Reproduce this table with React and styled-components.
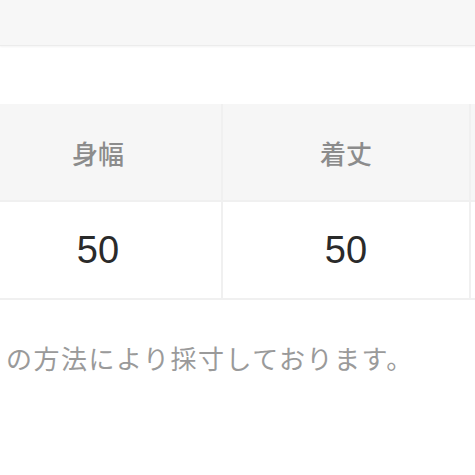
import styled, { createGlobalStyle } from "styled-components"

const Global = createGlobalStyle`
    body {
        margin: 0;
        background: #fff;
        overflow: hidden;
        font-family: "Noto Sans CJK JP", "Liberation Sans", sans-serif;
    }
`

const TopBar = styled.div`
    height: 45px;
    background: #f7f7f7;
    border-bottom: 1px solid #ececec;
    box-shadow: 0 1px 2px rgba(0,0,0,0.05);
`

const Spacer = styled.div`
    height: 58px;
`

const SizeTable = styled.div`
    display: grid;
    grid-template-columns: repeat(3, 246px);
    grid-auto-rows: 96px;
    gap: 2px;
    margin-left: -25px;
    padding: 0 0 2px;
    background: #f0f0f0;
    width: max-content;
`

const HeadCell = styled.div`
    display: flex;
    align-items: center;
    justify-content: center;
    background: #f6f6f6;
    color: #8c8c8c;
    font-size: 26px;
    font-weight: 500;
`

const ValueCell = styled.div`
    display: flex;
    align-items: center;
    justify-content: center;
    background: #fff;
    color: #2a2a2a;
    font-family: "Liberation Sans", Arial, sans-serif;
    font-size: 38px;
`

const Note = styled.p`
    margin: 42px 0 0 6px;
    color: #9a9a9a;
    font-size: 26px;
    letter-spacing: 1.5px;
    line-height: 1.2;
    white-space: nowrap;
`

// third column only peeks in at the right edge
const cols = [
    { label: "身幅", value: "50" },
    { label: "着丈", value: "50" },
    { label: "", value: "" },
]

export default function App() {
    return (
        <>
            <Global />
            <TopBar />
            <Spacer />
            <SizeTable>
                {cols.map((c, i) => <HeadCell key={i}>{c.label}</HeadCell>)}
                {cols.map((c, i) => <ValueCell key={i}>{c.value}</ValueCell>)}
            </SizeTable>
            <Note>の方法により採寸しております。</Note>
        </>
    )
}
